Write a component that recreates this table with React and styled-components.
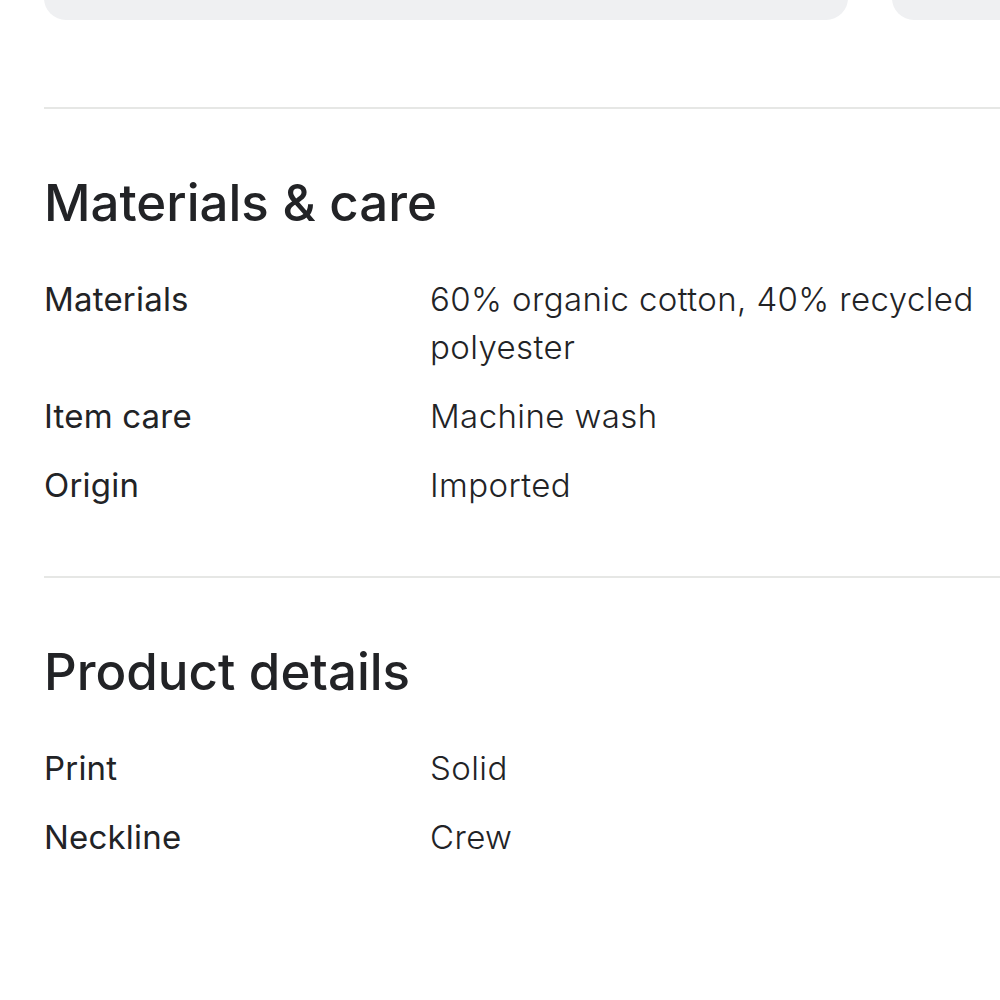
import React from "react";
import styled, { createGlobalStyle } from "styled-components";

const Global = createGlobalStyle`
  html, body { margin: 0; padding: 0; background: #fff; }
  body { font-family: Inter, "Noto Sans", "Liberation Sans", sans-serif; color: #222; overflow: hidden; }
`;

const Page = styled.div`
  width: 1000px;
  height: 1000px;
  overflow: hidden;
  padding-left: 44px;
  box-sizing: border-box;
`;

const Carousel = styled.div`
  display: flex;
  gap: 44px;
  margin-top: -24px;
  width: 1200px;
`;

const Thumb = styled.div`
  flex: 0 0 ${(p) => p.$w}px;
  height: 44px;
  border-radius: 24px;
  background: #eff0f2;
`;

const Divider = styled.hr`
  border: none;
  height: 2px;
  background: #e6e7e5;
  margin: ${(p) => p.$top}px 0 0 0;
`;

const Section = styled.section`
  display: flex;
  flex-direction: column;
`;

const Heading = styled.h2`
  margin: 64px 0 0 0;
  font-size: 51px;
  font-weight: 550;
  line-height: 60px;
  letter-spacing: 0px;
  color: #222326;
`;

const Specs = styled.dl`
  margin: 42px 0 0 0;
  display: grid;
  grid-template-columns: 386px 1fr;
  row-gap: 21px;
  padding-right: 20px;
`;

const Label = styled.dt`
  font-size: 33px;
  font-weight: 400;
  line-height: 48px;
  letter-spacing: 0.2px;
  color: #222326;
`;

const Value = styled.dd`
  margin: 0;
  font-size: 33px;
  font-weight: 300;
  line-height: 48px;
  letter-spacing: 0.4px;
  color: #222326;
`;

const sections = [
  {
    title: "Materials & care",
    rows: [
      ["Materials", "60% organic cotton, 40% recycled polyester"],
      ["Item care", "Machine wash"],
      ["Origin", "Imported"],
    ],
  },
  {
    title: "Product details",
    rows: [
      ["Print", "Solid"],
      ["Neckline", "Crew"],
    ],
  },
];

export default function App() {
  return (
    <Page>
      <Global />
      <Carousel>
        <Thumb $w={804} />
        <Thumb $w={300} />
      </Carousel>
      {sections.map((s, i) => (
        <Section key={s.title}>
          <Divider $top={i === 0 ? 87 : 67} />
          <Heading>{s.title}</Heading>
          <Specs>
            {s.rows.map(([k, v]) => (
              <React.Fragment key={k}>
                <Label>{k}</Label>
                <Value>{v}</Value>
              </React.Fragment>
            ))}
          </Specs>
        </Section>
      ))}
    </Page>
  );
}
